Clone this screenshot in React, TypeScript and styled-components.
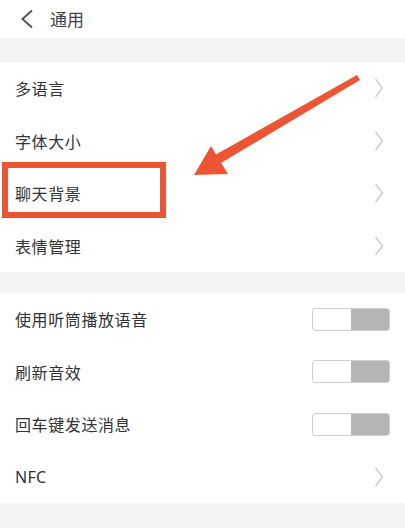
import styled, { createGlobalStyle } from "styled-components";

const GlobalStyle = createGlobalStyle`
  html, body {
    margin: 0;
    padding: 0;
    background: #ffffff;
  }
  body {
    font-family: "Noto Sans CJK SC", "Noto Sans", sans-serif;
  }
`;

const Page = styled.div`
  position: relative;
  width: 405px;
  height: 528px;
  overflow: hidden;
  background: #ffffff;
`;

const Header = styled.div`
  height: 38px;
  display: flex;
  align-items: center;
  padding-left: 20px;
  gap: 16px;
`;

const Title = styled.span`
  font-size: 17px;
  color: #404040;
  line-height: 1;
  margin-top: -1px;
`;

const Gap = styled.div<{ $h: number }>`
  height: ${(p) => p.$h}px;
  background: #f4f4f4;
`;

const Row = styled.div`
  height: 52.5px;
  display: flex;
  align-items: center;
  justify-content: space-between;
  padding: 0 15px;
  box-sizing: border-box;
`;

const Label = styled.span`
  font-size: 16px;
  color: #333333;
  letter-spacing: 0.6px;
`;

const LatinLabel = styled(Label)`
  font-family: "Noto Sans", sans-serif;
  letter-spacing: 0.3px;
`;

const ChevronBox = styled.svg`
  margin-right: 6px;
`;

const Switch = styled.div`
  width: 78px;
  height: 23px;
  display: flex;
  border: 1px solid #cfcfcf;
  border-radius: 3px;
  overflow: hidden;
  box-sizing: border-box;
`;

const Knob = styled.div`
  flex: 1;
  background: #ffffff;
`;

const Track = styled.div`
  flex: 1;
  background: #b5b5b5;
`;

const Highlight = styled.div`
  position: absolute;
  left: 2px;
  top: 162px;
  width: 164px;
  height: 56px;
  border: 6px solid #ec5534;
  box-sizing: border-box;
`;

const Overlay = styled.svg`
  position: absolute;
  left: 0;
  top: 0;
  pointer-events: none;
`;

function Chevron() {
  return (
    <ChevronBox width="10" height="20" viewBox="0 0 10 20">
      <polyline points="1.5,1 8.5,10 1.5,19" fill="none" stroke="#cccccc" strokeWidth="1.4" />
    </ChevronBox>
  );
}

function BackIcon() {
  return (
    <svg width="14" height="20" viewBox="0 0 14 20">
      <polyline points="12,1.5 2.5,10 12,18.5" fill="none" stroke="#555555" strokeWidth="2" />
    </svg>
  );
}

function Toggle() {
  return (
    <Switch>
      <Knob />
      <Track />
    </Switch>
  );
}

const linkRows = ["多语言", "字体大小", "聊天背景", "表情管理"];
const switchRows = ["使用听筒播放语音", "刷新音效", "回车键发送消息"];

export default function App() {
  return (
    <>
      <GlobalStyle />
      <Page>
        <Header>
          <BackIcon />
          <Title>通用</Title>
        </Header>
        <Gap $h={24} />
        {linkRows.map((t) => (
          <Row key={t}>
            <Label>{t}</Label>
            <Chevron />
          </Row>
        ))}
        <Gap $h={21} />
        {switchRows.map((t) => (
          <Row key={t}>
            <Label>{t}</Label>
            <Toggle />
          </Row>
        ))}
        <Row>
          <LatinLabel>NFC</LatinLabel>
          <Chevron />
        </Row>
        <Gap $h={30} />

        <Highlight />
        <Overlay width="405" height="528" viewBox="0 0 405 528">
          <polygon points="357,75 360,80 221,163 215,155" fill="#ec5534" />
          <polygon points="194,175 211,146 228,174" fill="#ec5534" />
        </Overlay>
      </Page>
    </>
  );
}
